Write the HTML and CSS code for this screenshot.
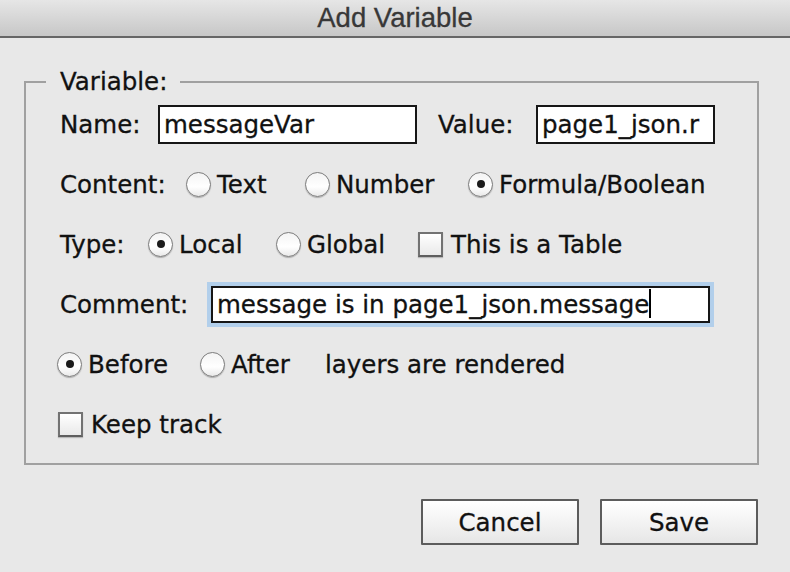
FILE: index.html
```html
<!DOCTYPE html>
<html>
<head>
<meta charset="utf-8">
<link rel="stylesheet" href="styles.css">
</head>
<body>
<div class="window">
  <div class="titlebar"><span class="title">Add Variable</span></div>
  <div class="content">
    <fieldset class="group">
      <legend class="legend">Variable:</legend>
      <div class="rows">
        <div class="row">
          <span class="lbl w-name">Name:</span>
          <div class="field f-name">messageVar</div>
          <span class="lbl w-value">Value:</span>
          <div class="field f-value">page1_json.r</div>
        </div>
        <div class="row">
          <span class="lbl w-content">Content:</span>
          <span class="opt w-text"><span class="radio"></span>Text</span>
          <span class="opt w-number"><span class="radio"></span>Number</span>
          <span class="opt"><span class="radio on"></span>Formula/Boolean</span>
        </div>
        <div class="row">
          <span class="lbl w-type">Type:</span>
          <span class="opt w-local"><span class="radio on"></span>Local</span>
          <span class="opt w-global"><span class="radio"></span>Global</span>
          <span class="opt"><span class="check"></span>This is a Table</span>
        </div>
        <div class="row">
          <span class="lbl w-comment">Comment:</span>
          <div class="field f-comment focused">message is in page1_json.message<span class="caret"></span></div>
        </div>
        <div class="row">
          <span class="opt w-before"><span class="radio on"></span>Before</span>
          <span class="opt w-after"><span class="radio"></span>After</span>
          <span class="opt">layers are rendered</span>
        </div>
        <div class="row">
          <span class="opt keep"><span class="check"></span>Keep track</span>
        </div>
      </div>
    </fieldset>
    <div class="buttons">
      <button class="btn">Cancel</button>
      <button class="btn">Save</button>
    </div>
  </div>
</div>
</body>
</html>
```
FILE: styles.css
```css
html, body {
  margin: 0;
  padding: 0;
  background: #e8e8e8;
}
body {
  width: 790px;
  height: 572px;
  overflow: hidden;
  font-family: "DejaVu Sans", "Noto Sans", sans-serif;
  font-size: 24.5px;
  color: #111;
  -webkit-text-stroke: 0.3px currentColor;
}
.titlebar {
  height: 36px;
  line-height: 35px;
  border-bottom: 2px solid #666;
  background: linear-gradient(#e6e6e6, #c7c7c7);
  text-align: center;
  font-family: "Liberation Sans", Arial, sans-serif;
  font-size: 27.5px;
  color: #383838;
}
.title {
  display: inline-block;
}
.content {
  padding-top: 30px;
}
.group {
  margin: 0 0 0 24px;
  width: 735px;
  box-sizing: border-box;
  padding: 0;
  border: 2px solid #a0a0a0;
  min-inline-size: 0;
}
.legend {
  margin-left: 20px;
  padding: 0 13px 0 14px;
  line-height: 28px;
}
.rows {
  display: flex;
  flex-direction: column;
  gap: 20px;
  padding: 8px 0 19px 34px;
}
.row {
  display: flex;
  align-items: center;
  height: 40px;
  white-space: nowrap;
}
.lbl { flex: none; }
.w-name { width: 98px; }
.w-value { width: 98px; margin-left: 21px; }
.w-content { width: 126px; }
.w-type { width: 88px; }
.w-comment { width: 151px; }
.field {
  box-sizing: border-box;
  height: 39px;
  border: 2px solid #161616;
  background: #fff;
  padding-left: 4px;
  line-height: 35px;
  overflow: hidden;
  white-space: nowrap;
}
.f-name { width: 259px; }
.f-value { width: 179px; }
.f-comment { width: 499px; height: 37px; line-height: 33px; }
.focused { box-shadow: 0 0 0 4px #b2cfeb; }
.caret {
  display: inline-block;
  width: 0;
  height: 29px;
  border-left: 2px solid #000;
  vertical-align: middle;
  margin-top: -4px;
}
.opt {
  display: flex;
  align-items: center;
  flex: none;
}
.w-text { width: 119px; }
.w-number { width: 163px; }
.w-local { width: 128px; }
.w-global { width: 142px; }
.w-before { width: 143px; margin-left: -3px; }
.w-after { width: 125px; }
.keep { margin-left: -2px; }
.radio {
  box-sizing: border-box;
  width: 25px;
  height: 25px;
  border-radius: 50%;
  border: 1.5px solid #7c7c7c;
  background: linear-gradient(#f4f4f4, #ffffff 60%, #e9e9e9);
  box-shadow: 0 1px 1px rgba(0,0,0,0.25);
  margin-right: 6px;
  display: flex;
  align-items: center;
  justify-content: center;
}
.radio.on::after {
  content: "";
  width: 8px;
  height: 8px;
  border-radius: 50%;
  background: #1a1a1a;
}
.check {
  box-sizing: border-box;
  width: 25px;
  height: 25px;
  border: 2px solid #727272;
  border-bottom-color: #5e5e5e;
  background: linear-gradient(#ffffff, #e9e9e9);
  box-shadow: 0 1px 1px rgba(0,0,0,0.2);
  margin-right: 8px;
}
.buttons {
  display: flex;
  justify-content: flex-end;
  gap: 21px;
  padding: 34px 32px 0 0;
}
.btn {
  box-sizing: border-box;
  width: 158px;
  height: 46px;
  border: 2px solid #5c5c5c;
  border-radius: 1px;
  background: linear-gradient(#ffffff, #f3f3f3 50%, #e6e6e6);
  font-family: "DejaVu Sans", "Noto Sans", sans-serif;
  font-size: 24.5px;
  color: #111;
  -webkit-text-stroke: 0.3px currentColor;
  padding: 0;
}
```
